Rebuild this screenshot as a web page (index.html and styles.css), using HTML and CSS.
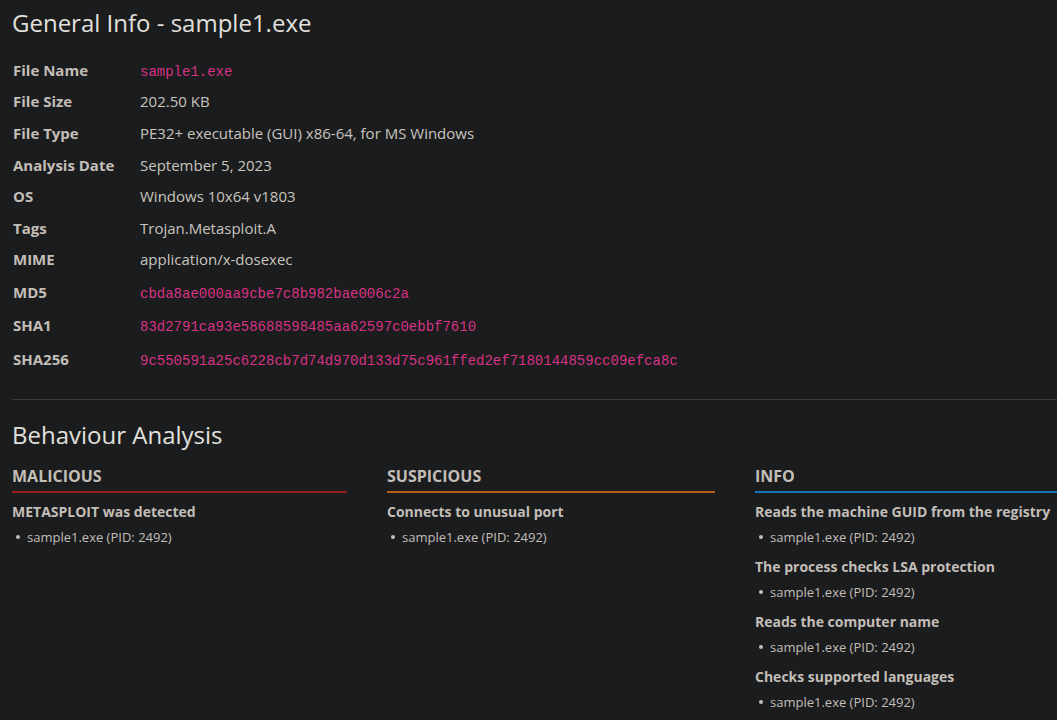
FILE: index.html
```html
<!DOCTYPE html>
<html lang="en">
<head>
<meta charset="utf-8">
<title>General Info - sample1.exe</title>
<link rel="stylesheet" href="styles.css">
</head>
<body>
<main class="page">
  <section class="general">
    <h1 class="title">General Info - sample1.exe</h1>
    <table class="info">
      <tbody>
        <tr><th>File Name</th><td><code>sample1.exe</code></td></tr>
        <tr><th>File Size</th><td>202.50 KB</td></tr>
        <tr><th>File Type</th><td>PE32+ executable (GUI) x86-64, for MS Windows</td></tr>
        <tr><th>Analysis Date</th><td>September 5, 2023</td></tr>
        <tr><th>OS</th><td>Windows 10x64 v1803</td></tr>
        <tr><th>Tags</th><td>Trojan.Metasploit.A</td></tr>
        <tr><th>MIME</th><td>application/x-dosexec</td></tr>
        <tr class="hash"><th>MD5</th><td><code>cbda8ae000aa9cbe7c8b982bae006c2a</code></td></tr>
        <tr class="hash"><th>SHA1</th><td><code>83d2791ca93e58688598485aa62597c0ebbf7610</code></td></tr>
        <tr class="hash last"><th>SHA256</th><td><code>9c550591a25c6228cb7d74d970d133d75c961ffed2ef7180144859cc09efca8c</code></td></tr>
      </tbody>
    </table>
  </section>
  <hr class="divider">
  <section class="behaviour">
    <h2 class="title">Behaviour Analysis</h2>
    <div class="columns">
      <div class="col malicious">
        <h3 class="col-head">MALICIOUS</h3>
        <div class="item">
          <h4>METASPLOIT was detected</h4>
          <ul><li>sample1.exe (PID: 2492)</li></ul>
        </div>
      </div>
      <div class="col suspicious">
        <h3 class="col-head">SUSPICIOUS</h3>
        <div class="item">
          <h4>Connects to unusual port</h4>
          <ul><li>sample1.exe (PID: 2492)</li></ul>
        </div>
      </div>
      <div class="col infocol">
        <h3 class="col-head">INFO</h3>
        <div class="item">
          <h4>Reads the machine GUID from the registry</h4>
          <ul><li>sample1.exe (PID: 2492)</li></ul>
        </div>
        <div class="item">
          <h4>The process checks LSA protection</h4>
          <ul><li>sample1.exe (PID: 2492)</li></ul>
        </div>
        <div class="item">
          <h4>Reads the computer name</h4>
          <ul><li>sample1.exe (PID: 2492)</li></ul>
        </div>
        <div class="item">
          <h4>Checks supported languages</h4>
          <ul><li>sample1.exe (PID: 2492)</li></ul>
        </div>
      </div>
    </div>
  </section>
</main>
</body>
</html>
```

FILE: styles.css
```css
html, body {
  margin: 0;
  padding: 0;
  background: #1b1c1e;
  overflow: hidden;
}
body {
  font-family: "Open Sans", "Noto Sans", sans-serif;
  color: #c9c4bd;
}
.page {
  padding: 6px 0 0 12px;
}
.title {
  margin: 0;
  font-size: 24px;
  font-weight: 400;
  color: #e2e0dc;
  line-height: 34px;
}
.info {
  border-collapse: collapse;
  margin-top: 14px;
}
.info th {
  text-align: left;
  font-weight: 700;
  font-size: 15px;
  color: #c3beb7;
  width: 127px;
  padding: 0 0 0 1px;
  height: 31.6px;
  vertical-align: middle;
}
.info td {
  font-size: 15px;
  color: #c9c4bd;
  padding: 0;
  height: 31.6px;
  vertical-align: middle;
}
.info tr.hash th, .info tr.hash td {
  height: 33px;
}
.info tr.last th, .info tr.last td {
  height: 35px;
}
code {
  font-family: "Liberation Mono", monospace;
  font-size: 14px;
  color: #d63384;
}
.divider {
  border: 0;
  border-top: 1px solid #3a3b3d;
  margin: 23px 0 18px 0;
}
.columns {
  display: grid;
  grid-template-columns: 335px 328px 1fr;
  column-gap: 40px;
  margin-top: 13px;
}
.col-head {
  margin: 0;
  font-size: 16px;
  font-weight: 700;
  color: #c3beb7;
  line-height: 22px;
  padding-bottom: 4px;
  border-bottom: 2px solid;
}
.malicious .col-head { border-color: #9b1c1c; }
.suspicious .col-head { border-color: #b5600f; }
.infocol .col-head { border-color: #1479b8; }
.item {
  margin-top: 8px;
}
.item + .item {
  margin-top: 8px;
}
.item h4 {
  margin: 0;
  font-size: 14px;
  font-weight: 700;
  color: #c3beb7;
  line-height: 22px;
  white-space: nowrap;
}
.item ul {
  margin: 3px 0 0 0;
  padding: 0 0 0 15px;
  font-size: 13px;
  line-height: 22px;
  color: #c3beb7;
  list-style: none;
}
.item li {
  position: relative;
}
.item li::before {
  content: "";
  position: absolute;
  left: -11px;
  top: 9px;
  width: 4px;
  height: 4px;
  border-radius: 50%;
  background: #c3beb7;
}
```
